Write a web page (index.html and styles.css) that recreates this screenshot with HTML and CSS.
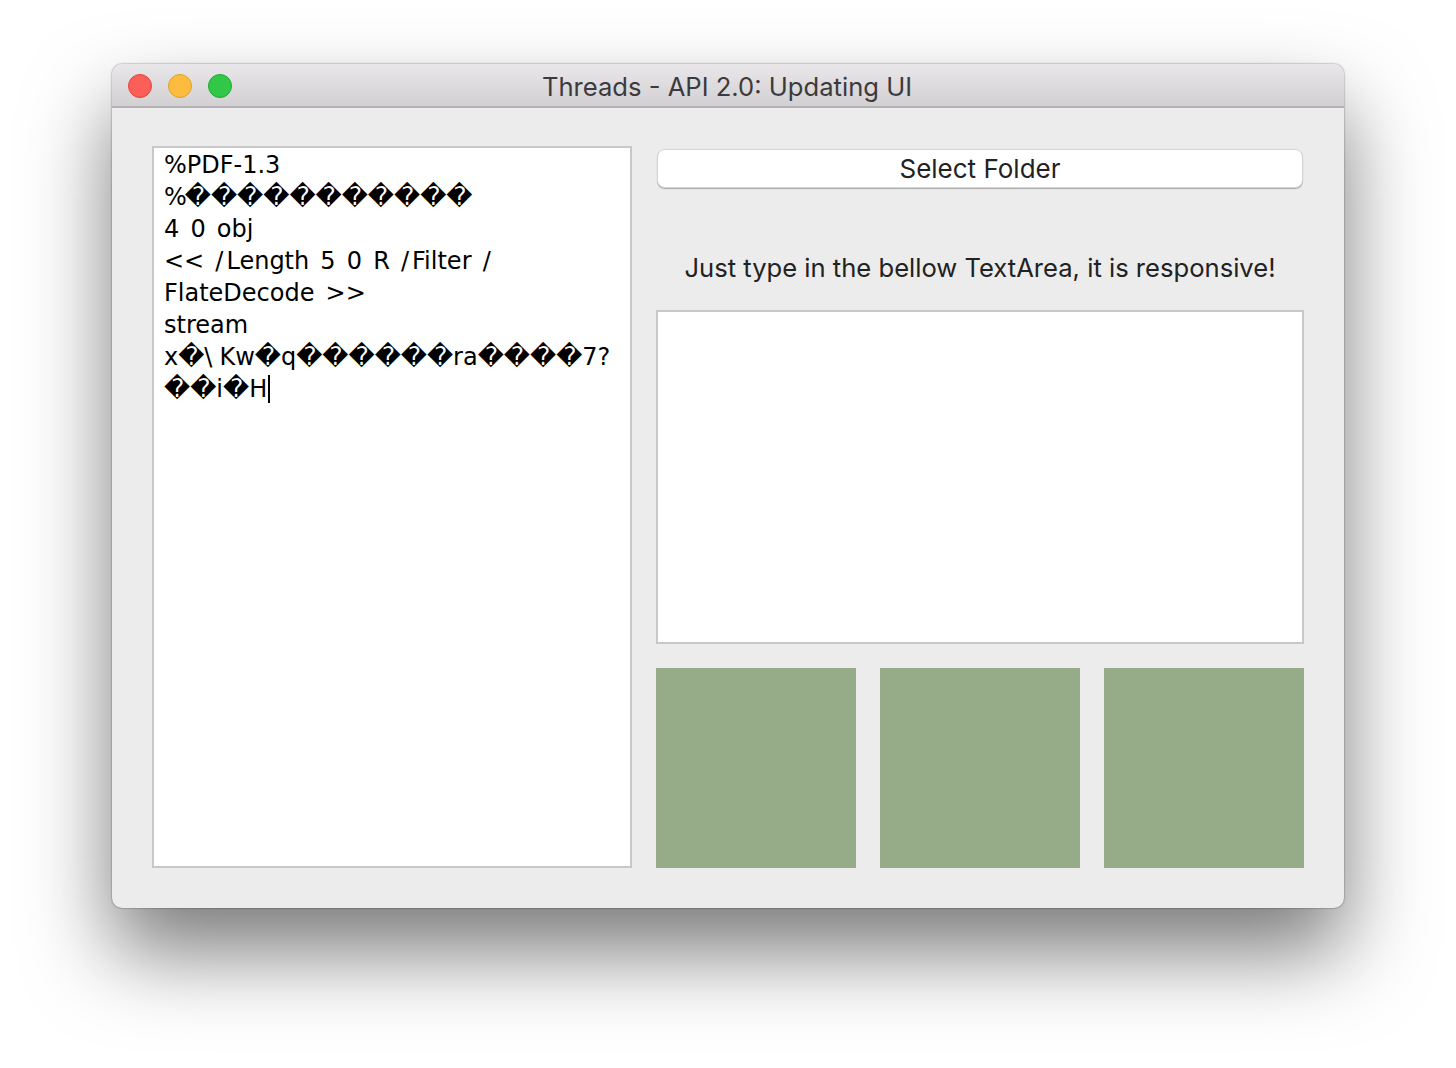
FILE: index.html
```html
<!DOCTYPE html>
<html lang="en">
<head>
<meta charset="utf-8">
<title>Threads - API 2.0: Updating UI</title>
<link rel="stylesheet" href="styles.css">
</head>
<body>
<div class="window">
  <header class="titlebar">
    <div class="lights">
      <span class="light red"></span>
      <span class="light yellow"></span>
      <span class="light green"></span>
    </div>
    <div class="title">Threads - API 2.0: Updating UI</div>
  </header>
  <main class="content">
    <div class="editor">
      <div class="line">%PDF-1.3</div>
      <div class="line"><span class="pct">%</span><span class="bad">�����������</span></div>
      <div class="line">4 0 obj</div>
      <div class="line">&lt;&lt; <span class="slash">/</span>Length 5 0 R <span class="slash">/</span>Filter <span class="slash">/</span></div>
      <div class="line">FlateDecode &gt;&gt;</div>
      <div class="line">stream</div>
      <div class="line">x<span class="bad">�</span><span class="slash wide">\</span>Kw<span class="bad">�</span>q<span class="bad">������</span>ra<span class="bad">����</span>7?</div>
      <div class="line"><span class="bad">��</span>i<span class="bad">�</span>H<span class="caret"></span></div>
    </div>
    <div class="side">
      <button class="select">Select Folder</button>
      <p class="hint">Just type in the bellow TextArea, it is responsive!</p>
      <div class="area"></div>
      <div class="boxes">
        <div class="box"></div>
        <div class="box"></div>
        <div class="box"></div>
      </div>
    </div>
  </main>
</div>
</body>
</html>
```
FILE: styles.css
```css
* { box-sizing: border-box; }
html, body { margin: 0; height: 100%; }
body {
  background: #fff;
  padding: 64px 112px 0;
  overflow: hidden;
  font-family: "Inter", "Liberation Sans", sans-serif;
}
.window {
  width: 1232px;
  height: 844px;
  background: #ececec;
  border-radius: 10px;
  box-shadow: 0 44px 84px rgba(0, 0, 0, 0.52), 0 0 2px rgba(0, 0, 0, 0.55);
  overflow: hidden;
}
.titlebar {
  height: 44px;
  display: flex;
  align-items: center;
  position: relative;
  background: linear-gradient(#e9e7e9, #d2d0d2);
  border-bottom: 2px solid #b4b2b4;
}
.lights { display: flex; gap: 16px; padding: 2px 0 0 16px; }
.light { width: 24px; height: 24px; border-radius: 50%; border: 1px solid; }
.red { background: #fc5f57; border-color: #e0443e; }
.yellow { background: #fdbc40; border-color: #dea123; }
.green { background: #33c748; border-color: #1aab29; }
.title {
  position: absolute;
  left: 0;
  right: 2px;
  top: 6px;
  text-align: center;
  font-size: 25.6px;
  line-height: 34px;
  color: #3c3a3c;
}
.content {
  display: flex;
  gap: 24px;
  padding: 38px 40px 0;
}
.editor {
  width: 480px;
  height: 722px;
  background: #fff;
  border: 2px solid #c8c8c8;
  padding: 1px 10px 0;
  font-family: "DejaVu Sans", sans-serif;
  font-size: 24px;
  line-height: 32px;
  word-spacing: 3.5px;
  color: #000;
}
.line { white-space: pre; height: 32px; }
.bad { font-size: 25.5px; line-height: 1; }
.pct { letter-spacing: -2px; }
.slash { letter-spacing: 3px; }
.wide { letter-spacing: 7px; }
.caret {
  display: inline-block;
  width: 2px;
  height: 28px;
  margin-left: 1px;
  vertical-align: -6px;
  background: #000;
}
.side { width: 648px; display: flex; flex-direction: column; }
.select {
  display: block;
  width: 646px;
  height: 39px;
  margin: 3px 1px 1px;
  padding: 0;
  background: #fff;
  border: 1px solid #d4d4d4;
  border-radius: 8px;
  box-shadow: 0 1px 1px rgba(0, 0, 0, 0.28);
  font: inherit;
  font-size: 26px;
  color: #222;
}
.hint {
  margin: 62px 0 0;
  height: 34px;
  text-align: center;
  font-size: 25.6px;
  line-height: 34px;
  color: #222;
}
.area {
  margin-top: 25px;
  height: 334px;
  background: #fff;
  border: 2px solid #c8c8c8;
}
.boxes { display: flex; gap: 24px; margin-top: 24px; }
.box { width: 200px; height: 200px; background: #96ac88; }
```
